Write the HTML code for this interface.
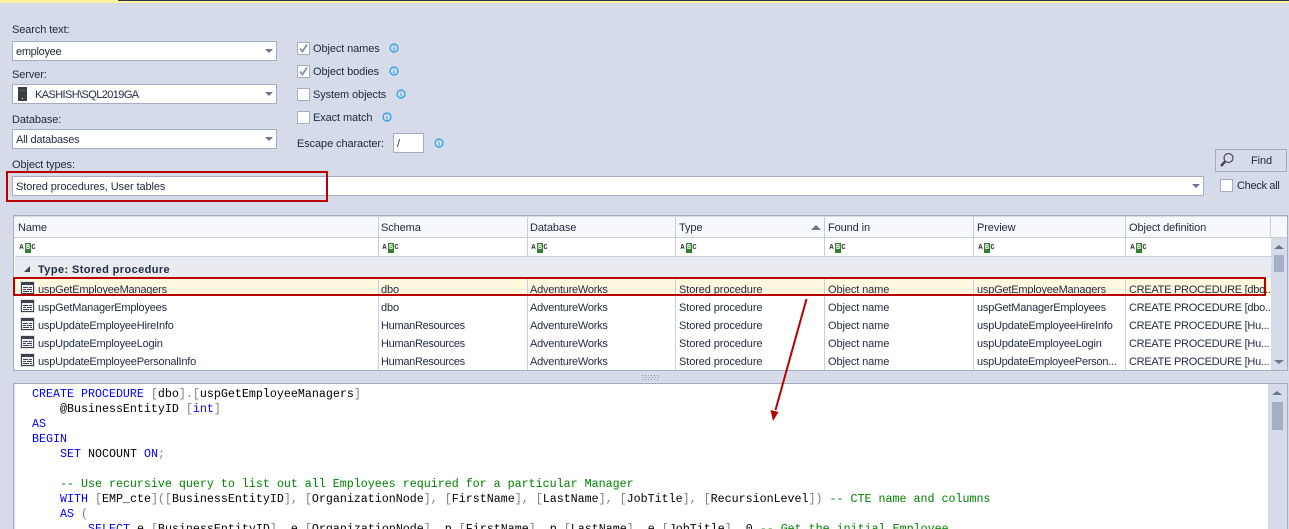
<!DOCTYPE html>
<html><head><meta charset="utf-8"><style>
html,body{margin:0;padding:0;background:#d5dbe9;width:1289px;height:529px;overflow:hidden}
body{position:relative;font-family:"Liberation Sans",sans-serif;font-size:11px;color:#1e2a3e}
.a{position:absolute;box-sizing:border-box}
.t{position:absolute;white-space:nowrap;line-height:14px;height:14px;margin-top:1px;letter-spacing:-.1px}
.u{letter-spacing:-.2px}.aw{letter-spacing:-.25px}.hr{letter-spacing:-.3px}.cp{letter-spacing:-.27px}
.i{position:absolute;box-sizing:border-box;background:#fff;border:1px solid #a3acc2}
.d{position:absolute;width:0;height:0;border-left:4px solid transparent;border-right:4px solid transparent;border-top:4px solid #6d7689}
.c{position:absolute;box-sizing:border-box;width:13px;height:13px;background:#fff;border:1px solid #a3acc2}
.f{position:absolute;width:10px;height:10px}
.v{position:absolute;width:1px;background:#c8cede}
.abc{position:absolute;top:243px;width:17px;height:10px;font:bold 7px/10px "Liberation Mono",monospace;color:#333}
.abc span{position:absolute;top:0;height:10px;text-align:center}
.abc .x{left:0;width:5px}.abc .y{left:6px;width:6px;background:#358030;color:#fff}.abc .z{left:12px;width:5px}
.p{position:absolute;left:20px;width:15px;height:14px}
.m{position:absolute;left:32px;margin-top:1px;font-family:"Liberation Mono",monospace;font-size:11.67px;line-height:15px;height:15px;white-space:pre;color:#000}
.b{color:#0000ff}.g{color:#808080}.k{color:#008000}
</style></head><body>
<svg width="0" height="0" style="position:absolute"><defs>
<symbol id="info" viewBox="0 0 10 10"><circle cx="5" cy="5" r="4" fill="none" stroke="#2a9ddc" stroke-width="1.2"/><rect x="4.500" y="2.500" width="1" height="1" fill="#2a9ddc"/><rect x="4.500" y="4.500" width="1" height="3" fill="#2a9ddc"/></symbol>
<symbol id="proc" viewBox="0 0 15 14"><rect width="15" height="14" fill="#dfe2ea"/><rect x="1.500" y="1.500" width="12" height="11" fill="#f4f5f8" stroke="#3d4250"/><rect x="1" y="1" width="13" height="3" fill="#3d4250"/><path d="M3 6.500h5M9 6.500h3M3 8.500h3M7 8.500h5M3 10.500h6M10 10.500h2" stroke="#3d4250"/></symbol>
</defs></svg>
<div class="a" style="left:0;top:0;width:1289px;height:3px;background:#fff29d"></div>
<div class="a" style="left:118px;top:0;width:1171px;height:1px;background:#2a3350"></div>

<div class="t" style="left:12px;top:22px">Search text:</div>
<div class="i" style="left:12px;top:41px;width:265px;height:20px"></div>
<div class="t" style="left:16px;top:44px;letter-spacing:-.3px">employee</div>
<div class="d" style="left:265px;top:49px"></div>
<div class="t" style="left:12px;top:67px">Server:</div>
<div class="i" style="left:12px;top:84px;width:265px;height:20px"></div>
<svg class="a" style="left:18px;top:87px" width="9" height="14"><rect width="9" height="14" fill="#3a3f45"/><rect x="1" y="3" width="7" height="1" fill="#5a5f65"/><rect x="4" y="11" width="1" height="1" fill="#fff"/></svg>
<div class="t" style="left:35px;top:87px;letter-spacing:-.6px">KASHISH\SQL2019GA</div>
<div class="d" style="left:265px;top:92px"></div>
<div class="t" style="left:12px;top:112px">Database:</div>
<div class="i" style="left:12px;top:129px;width:265px;height:20px"></div>
<div class="t" style="left:16px;top:132px;letter-spacing:-.2px">All databases</div>
<div class="d" style="left:265px;top:137px"></div>
<div class="t" style="left:12px;top:157px">Object types:</div>
<div class="i" style="left:12px;top:176px;width:1192px;height:20px"></div>
<div class="t" style="left:16px;top:179px">Stored procedures, User tables</div>
<div class="d" style="left:1192px;top:184px"></div>
<div class="a" style="left:6px;top:171px;width:322px;height:31px;border:2px solid #b80000"></div>

<div class="c" style="left:297px;top:42px"></div>
<svg class="a" style="left:298px;top:43px" width="11" height="11"><path d="M2 5.500 L4.500 8.500 L9 1.500" fill="none" stroke="#8890a2" stroke-width="1.800"/></svg>
<div class="t" style="left:313px;top:41px">Object names</div><svg class="f" style="left:389px;top:43px"><use href="#info"/></svg>
<div class="c" style="left:297px;top:65px"></div>
<svg class="a" style="left:298px;top:66px" width="11" height="11"><path d="M2 5.500 L4.500 8.500 L9 1.500" fill="none" stroke="#8890a2" stroke-width="1.800"/></svg>
<div class="t" style="left:313px;top:64px">Object bodies</div><svg class="f" style="left:389px;top:66px"><use href="#info"/></svg>
<div class="c" style="left:297px;top:88px"></div>
<div class="t" style="left:313px;top:87px">System objects</div><svg class="f" style="left:396px;top:89px"><use href="#info"/></svg>
<div class="c" style="left:297px;top:111px"></div>
<div class="t" style="left:313px;top:110px">Exact match</div><svg class="f" style="left:382px;top:112px"><use href="#info"/></svg>
<div class="t" style="left:297px;top:136px">Escape character:</div>
<div class="i" style="left:393px;top:133px;width:31px;height:20px"></div>
<div class="t" style="left:397px;top:136px">/</div>
<svg class="f" style="left:434px;top:138px"><use href="#info"/></svg>

<div class="a" style="left:1215px;top:149px;width:72px;height:23px;border:1px solid #a3acc2;background:#d5dbe9"></div>
<svg class="a" style="left:1219px;top:152px" width="16" height="17"><circle cx="9.500" cy="6" r="4.500" fill="none" stroke="#4a4f58" stroke-width="1.200"/><path d="M6 9.500 L2 14" stroke="#3a3f48" stroke-width="2.400"/></svg>
<div class="t" style="left:1251px;top:153px">Find</div>
<div class="c" style="left:1220px;top:179px"></div>
<div class="t" style="left:1237px;top:178px;letter-spacing:-.3px">Check all</div>

<!-- grid -->
<div class="a" style="left:13px;top:215px;width:1275px;height:156px;border:1px solid #a3acc2;background:#fff"></div>
<div class="a" style="left:14px;top:217px;width:1273px;height:21px;background:#f7f8fc;border-bottom:1px solid #c8cede"></div>
<div class="a" style="left:14px;top:216px;width:1273px;height:1px;background:#d5dbe9"></div>
<div class="a" style="left:15px;top:256px;width:1256px;height:1px;background:#c8cede"></div>
<div class="a" style="left:15px;top:257px;width:1256px;height:21px;background:#eaebf1"></div>
<div class="a" style="left:15px;top:278px;width:1256px;height:18px;background:#fff8de"></div>

<div class="v" style="left:378px;top:217px;height:39px"></div><div class="v" style="left:378px;top:279px;height:91px"></div>
<div class="v" style="left:527px;top:217px;height:39px"></div><div class="v" style="left:527px;top:279px;height:91px"></div>
<div class="v" style="left:675px;top:217px;height:39px"></div><div class="v" style="left:675px;top:279px;height:91px"></div>
<div class="v" style="left:824px;top:217px;height:39px"></div><div class="v" style="left:824px;top:279px;height:91px"></div>
<div class="v" style="left:973px;top:217px;height:39px"></div><div class="v" style="left:973px;top:279px;height:91px"></div>
<div class="v" style="left:1125px;top:217px;height:39px"></div><div class="v" style="left:1125px;top:279px;height:91px"></div>
<div class="v" style="left:1270px;top:217px;height:20px"></div>

<div class="t" style="left:18px;top:220px">Name</div>
<div class="t" style="left:381px;top:220px">Schema</div>
<div class="t" style="left:530px;top:220px">Database</div>
<div class="t" style="left:679px;top:220px">Type</div>
<div class="a" style="left:811px;top:225px;width:0;height:0;border-left:5px solid transparent;border-right:5px solid transparent;border-bottom:5px solid #6d7689"></div>
<div class="t" style="left:828px;top:220px">Found in</div>
<div class="t" style="left:977px;top:220px">Preview</div>
<div class="t" style="left:1129px;top:220px">Object definition</div>

<div class="abc" style="left:19px"><span class="x">A</span><span class="y">B</span><span class="z">C</span></div>
<div class="abc" style="left:382px"><span class="x">A</span><span class="y">B</span><span class="z">C</span></div>
<div class="abc" style="left:531px"><span class="x">A</span><span class="y">B</span><span class="z">C</span></div>
<div class="abc" style="left:680px"><span class="x">A</span><span class="y">B</span><span class="z">C</span></div>
<div class="abc" style="left:829px"><span class="x">A</span><span class="y">B</span><span class="z">C</span></div>
<div class="abc" style="left:978px"><span class="x">A</span><span class="y">B</span><span class="z">C</span></div>
<div class="abc" style="left:1130px"><span class="x">A</span><span class="y">B</span><span class="z">C</span></div>

<div class="a" style="left:24px;top:266px;width:0;height:0;border-left:6px solid transparent;border-bottom:6px solid #3a4256"></div>
<div class="t" style="left:38px;top:262px;font-weight:bold;color:#1e2a45;letter-spacing:.4px">Type: Stored procedure</div>

<!-- row 1 -->
<svg class="p" style="top:281px"><use href="#proc"/></svg>
<div class="t u" style="left:38px;top:282px">uspGetEmployeeManagers</div>
<div class="t" style="left:381px;top:282px">dbo</div>
<div class="t aw" style="left:530px;top:282px">AdventureWorks</div>
<div class="t" style="left:679px;top:282px">Stored procedure</div>
<div class="t" style="left:828px;top:282px">Object name</div>
<div class="t u" style="left:977px;top:282px">uspGetEmployeeManagers</div>
<div class="t cp" style="left:1129px;top:282px">CREATE PROCEDURE [dbo..</div>
<!-- row 2 -->
<svg class="p" style="top:299px"><use href="#proc"/></svg>
<div class="t u" style="left:38px;top:300px">uspGetManagerEmployees</div>
<div class="t" style="left:381px;top:300px">dbo</div>
<div class="t aw" style="left:530px;top:300px">AdventureWorks</div>
<div class="t" style="left:679px;top:300px">Stored procedure</div>
<div class="t" style="left:828px;top:300px">Object name</div>
<div class="t u" style="left:977px;top:300px">uspGetManagerEmployees</div>
<div class="t cp" style="left:1129px;top:300px">CREATE PROCEDURE [dbo...</div>
<!-- row 3 -->
<svg class="p" style="top:317px"><use href="#proc"/></svg>
<div class="t u" style="left:38px;top:318px">uspUpdateEmployeeHireInfo</div>
<div class="t hr" style="left:381px;top:318px">HumanResources</div>
<div class="t aw" style="left:530px;top:318px">AdventureWorks</div>
<div class="t" style="left:679px;top:318px">Stored procedure</div>
<div class="t" style="left:828px;top:318px">Object name</div>
<div class="t u" style="left:977px;top:318px">uspUpdateEmployeeHireInfo</div>
<div class="t cp" style="left:1129px;top:318px">CREATE PROCEDURE [Hu...</div>
<!-- row 4 -->
<svg class="p" style="top:335px"><use href="#proc"/></svg>
<div class="t u" style="left:38px;top:336px">uspUpdateEmployeeLogin</div>
<div class="t hr" style="left:381px;top:336px">HumanResources</div>
<div class="t aw" style="left:530px;top:336px">AdventureWorks</div>
<div class="t" style="left:679px;top:336px">Stored procedure</div>
<div class="t" style="left:828px;top:336px">Object name</div>
<div class="t u" style="left:977px;top:336px">uspUpdateEmployeeLogin</div>
<div class="t cp" style="left:1129px;top:336px">CREATE PROCEDURE [Hu...</div>
<!-- row 5 -->
<svg class="p" style="top:353px"><use href="#proc"/></svg>
<div class="t u" style="left:38px;top:354px">uspUpdateEmployeePersonalInfo</div>
<div class="t hr" style="left:381px;top:354px">HumanResources</div>
<div class="t aw" style="left:530px;top:354px">AdventureWorks</div>
<div class="t" style="left:679px;top:354px">Stored procedure</div>
<div class="t" style="left:828px;top:354px">Object name</div>
<div class="t aw" style="left:977px;top:354px">uspUpdateEmployeePerson...</div>
<div class="t cp" style="left:1129px;top:354px">CREATE PROCEDURE [Hu...</div>

<div class="a" style="left:1271px;top:238px;width:16px;height:132px;background:#d5dbe9"></div>
<div class="a" style="left:1274px;top:245px;width:0;height:0;border-left:5px solid transparent;border-right:5px solid transparent;border-bottom:4px solid #6d7689"></div>
<div class="a" style="left:1274px;top:255px;width:10px;height:17px;background:#a7afc4"></div>
<div class="a" style="left:1274px;top:360px;width:0;height:0;border-left:5px solid transparent;border-right:5px solid transparent;border-top:4px solid #6d7689"></div>
<div class="a" style="left:13px;top:277px;width:1253px;height:19px;border:2px solid #b80000;border-radius:1px"></div>

<!-- splitter -->
<svg class="a" style="left:642px;top:375px" width="18" height="5"><path d="M0 .5h18M0 4.500h18" stroke="#8a92a6" stroke-dasharray="1 2"/><path d="M1 2.500h17" stroke="#8a92a6" stroke-dasharray="1 2"/></svg>

<!-- code panel -->
<div class="a" style="left:13px;top:383px;width:1275px;height:146px;border:1px solid #a3acc2;border-bottom:0;background:#fff"></div>
<div class="a" style="left:14px;top:384px;width:1px;height:145px;background:#d5dbe9"></div>
<div class="a" style="left:1268px;top:384px;width:19px;height:145px;background:#d5dbe9"></div>
<div class="a" style="left:1272px;top:391px;width:0;height:0;border-left:5px solid transparent;border-right:5px solid transparent;border-bottom:4px solid #6d7689"></div>
<div class="a" style="left:1272px;top:402px;width:11px;height:28px;background:#a7afc4"></div>

<div class="m" style="top:386px"><span class="b">CREATE PROCEDURE</span> <span class="g">[</span>dbo<span class="g">].[</span>uspGetEmployeeManagers<span class="g">]</span></div>
<div class="m" style="top:401px">    @BusinessEntityID <span class="g">[</span><span class="b">int</span><span class="g">]</span></div>
<div class="m" style="top:416px"><span class="b">AS</span></div>
<div class="m" style="top:431px"><span class="b">BEGIN</span></div>
<div class="m" style="top:446px">    <span class="b">SET</span> NOCOUNT <span class="b">ON</span><span class="g">;</span></div>
<div class="m" style="top:476px">    <span class="k">-- Use recursive query to list out all Employees required for a particular Manager</span></div>
<div class="m" style="top:491px">    <span class="b">WITH</span> <span class="g">[</span>EMP_cte<span class="g">]([</span>BusinessEntityID<span class="g">], [</span>OrganizationNode<span class="g">], [</span>FirstName<span class="g">], [</span>LastName<span class="g">], [</span>JobTitle<span class="g">], [</span>RecursionLevel<span class="g">])</span> <span class="k">-- CTE name and columns</span></div>
<div class="m" style="top:506px">    <span class="b">AS</span> <span class="g">(</span></div>
<div class="m" style="top:521px">        <span class="b">SELECT</span> e<span class="g">.[</span>BusinessEntityID<span class="g">],</span> e<span class="g">.[</span>OrganizationNode<span class="g">],</span> p<span class="g">.[</span>FirstName<span class="g">],</span> p<span class="g">.[</span>LastName<span class="g">],</span> e<span class="g">.[</span>JobTitle<span class="g">],</span> 0 <span class="k">-- Get the initial Employee</span></div>

<!-- arrow -->
<svg class="a" style="left:760px;top:290px" width="60" height="140"><path d="M46.500 9 L15.500 120" stroke="#b80000" stroke-width="2" fill="none"/><path d="M13 131 L10.500 120 L18.500 122 Z" fill="#b80000"/></svg>
</body></html>
